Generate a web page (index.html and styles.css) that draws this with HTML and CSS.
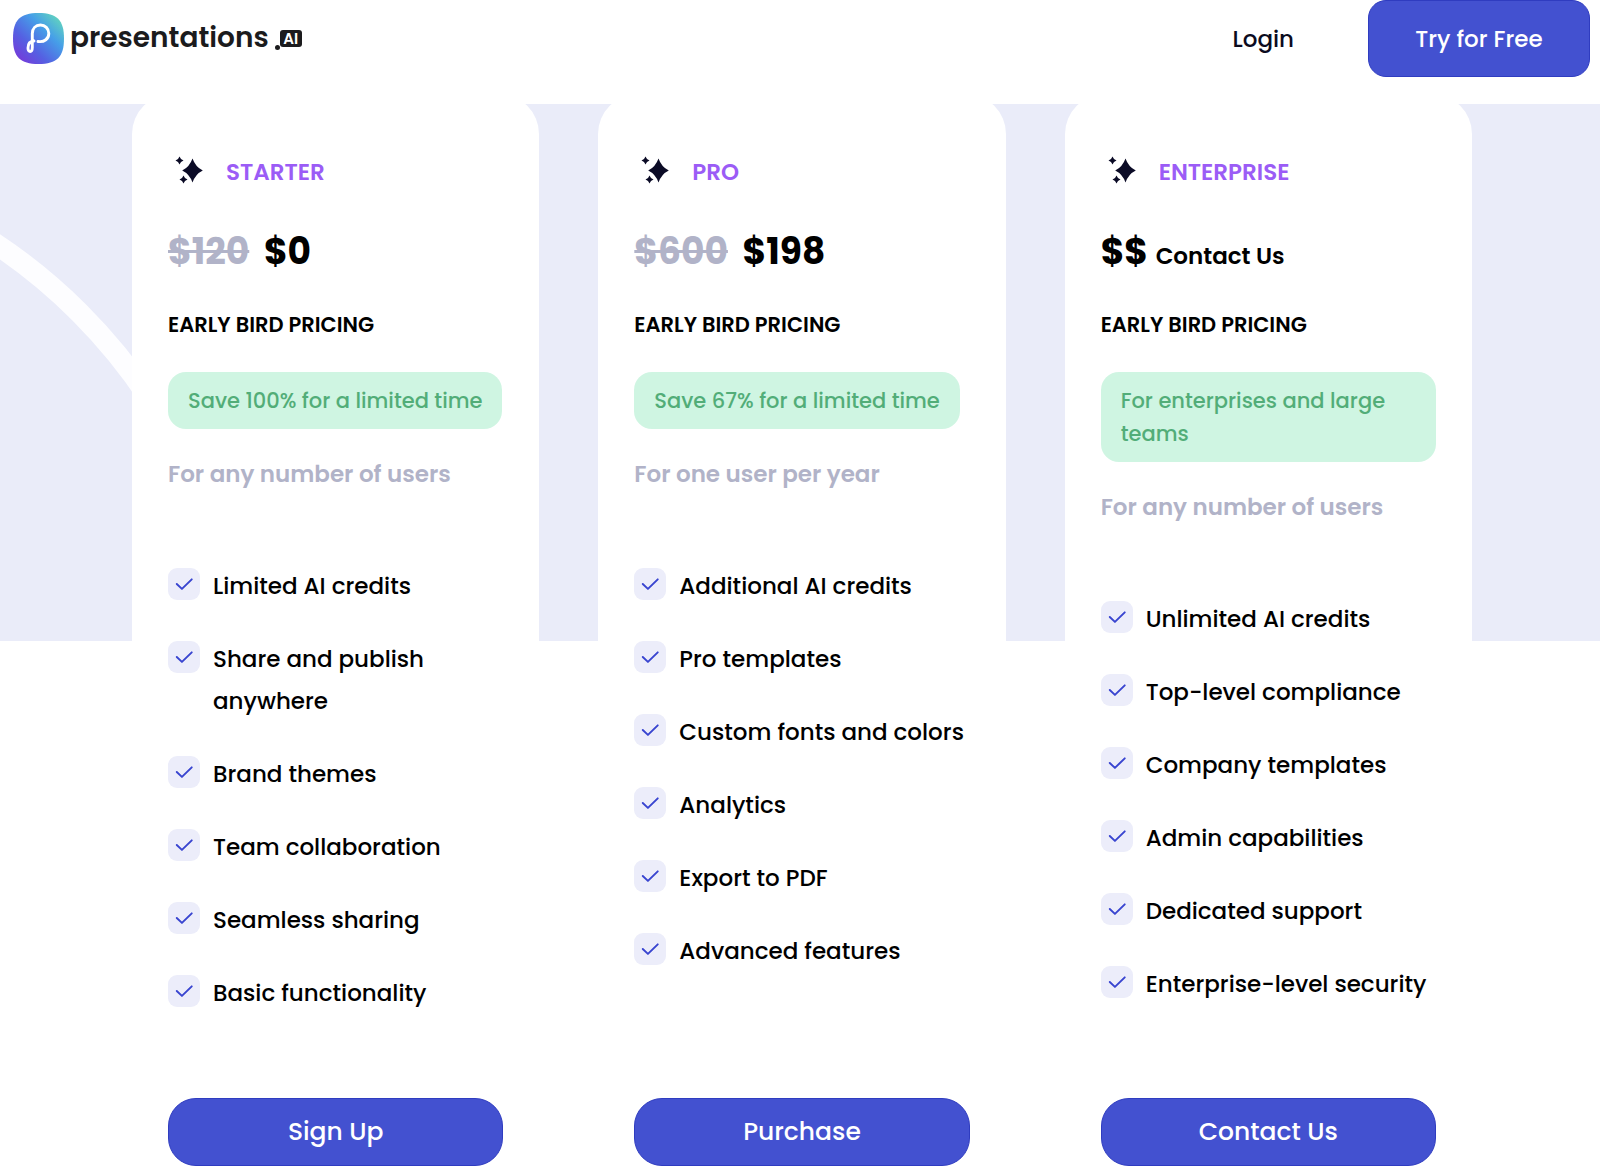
FILE: index.html
```html
<!DOCTYPE html>
<html lang="en">
<head>
    <meta charset="UTF-8">
    <meta name="viewport" content="width=device-width, initial-scale=1.0">
    <title>Pricing - Presentations.AI</title>
    <link rel="stylesheet" href="styles.css">
</head>
<body>
    <!-- Shared icons -->
    <svg class="sprite" aria-hidden="true">
        <symbol id="sparkle" viewBox="0 0 36 36">
            <path d="M24.500 4.500Q27.500 13 34.800 16.500Q27.500 20 24.500 28.500Q21.500 20 14.200 16.500Q21.500 13 24.500 4.500Z"/>
            <path d="M11.500 2.500Q12.500 5.500 15.500 6.500Q12.500 7.500 11.500 10.500Q10.500 7.500 7.500 6.500Q10.500 5.500 11.500 2.500Z"/>
            <path d="M15.500 21.500Q16.500 24.500 19.500 25.500Q16.500 26.500 15.500 29.500Q14.500 26.500 11.500 25.500Q14.500 24.500 15.500 21.500Z"/>
        </symbol>
        <symbol id="check" viewBox="0 0 31 31">
            <path d="M8.500 15.500L13.500 20.200L23 11" fill="none" stroke="#3945d0" stroke-width="1.900" stroke-linecap="round" stroke-linejoin="round"/>
        </symbol>
    </svg>

    <header class="header">
        <a class="logo" href="#">
            <svg class="logo-mark" viewBox="0 0 51 51" aria-hidden="true">
                <defs>
                    <linearGradient id="logo-fill" x1="0" y1="1" x2="1" y2="0">
                        <stop offset="0.050" stop-color="#7a35d8"/>
                        <stop offset="0.350" stop-color="#5560e2"/>
                        <stop offset="0.650" stop-color="#469fe8"/>
                        <stop offset="0.950" stop-color="#66dcb8"/>
                    </linearGradient>
                </defs>
                <path d="M25.500 0C44 0 51 7 51 25.500S44 51 25.500 51S0 44 0 25.500S7 0 25.500 0Z" fill="url(#logo-fill)"/>
                <path d="M25 28.500C31.500 29.500 35.800 25.500 35.800 20.500C35.800 15.500 32 12 27.500 12C22.500 12 19.300 15.500 19.300 20.500V34.500C19.300 39.800 15 39.800 15 35C15 30.500 16.500 28.300 21 28" fill="none" stroke="#fff" stroke-width="2.900" stroke-linecap="round"/>
            </svg>
            <span class="logo-name">presentations</span>
            <span class="logo-dot"></span>
            <span class="logo-ai">AI</span>
        </a>
        <nav class="nav">
            <a class="login" href="#">Login</a>
            <button class="btn btn-try" type="button">Try for Free</button>
        </nav>
    </header>

    <main class="pricing">
        <div class="band">
            <svg class="band-ring" aria-hidden="true">
                <circle cx="-306" cy="594" r="545"/>
            </svg>
        </div>

        <div class="plans">
            <section class="plan">
                <h2 class="plan-name"><svg class="sparkle"><use href="#sparkle"/></svg>STARTER</h2>
                <p class="price"><s class="old-price">$120</s> <span>$0</span></p>
                <p class="early">EARLY BIRD PRICING</p>
                <p class="save">Save 100% for a limited time</p>
                <p class="users">For any number of users</p>
                <ul class="features">
                    <li><svg class="check"><use href="#check"/></svg>Limited AI credits</li>
                    <li><svg class="check"><use href="#check"/></svg>Share and publish anywhere</li>
                    <li><svg class="check"><use href="#check"/></svg>Brand themes</li>
                    <li><svg class="check"><use href="#check"/></svg>Team collaboration</li>
                    <li><svg class="check"><use href="#check"/></svg>Seamless sharing</li>
                    <li><svg class="check"><use href="#check"/></svg>Basic functionality</li>
                </ul>
                <button class="btn btn-plan" type="button">Sign Up</button>
            </section>

            <section class="plan">
                <h2 class="plan-name"><svg class="sparkle"><use href="#sparkle"/></svg>PRO</h2>
                <p class="price"><s class="old-price">$600</s> <span>$198</span></p>
                <p class="early">EARLY BIRD PRICING</p>
                <p class="save">Save 67% for a limited time</p>
                <p class="users">For one user per year</p>
                <ul class="features">
                    <li><svg class="check"><use href="#check"/></svg>Additional AI credits</li>
                    <li><svg class="check"><use href="#check"/></svg>Pro templates</li>
                    <li><svg class="check"><use href="#check"/></svg>Custom fonts and colors</li>
                    <li><svg class="check"><use href="#check"/></svg>Analytics</li>
                    <li><svg class="check"><use href="#check"/></svg>Export to PDF</li>
                    <li><svg class="check"><use href="#check"/></svg>Advanced features</li>
                </ul>
                <button class="btn btn-plan" type="button">Purchase</button>
            </section>

            <section class="plan">
                <h2 class="plan-name"><svg class="sparkle"><use href="#sparkle"/></svg>ENTERPRISE</h2>
                <p class="price"><span>$$</span> <span class="price-note">Contact Us</span></p>
                <p class="early">EARLY BIRD PRICING</p>
                <p class="save">For enterprises and large teams</p>
                <p class="users">For any number of users</p>
                <ul class="features">
                    <li><svg class="check"><use href="#check"/></svg>Unlimited AI credits</li>
                    <li><svg class="check"><use href="#check"/></svg>Top-level compliance</li>
                    <li><svg class="check"><use href="#check"/></svg>Company templates</li>
                    <li><svg class="check"><use href="#check"/></svg>Admin capabilities</li>
                    <li><svg class="check"><use href="#check"/></svg>Dedicated support</li>
                    <li><svg class="check"><use href="#check"/></svg>Enterprise-level security</li>
                </ul>
                <button class="btn btn-plan" type="button">Contact Us</button>
            </section>
        </div>
    </main>
</body>
</html>
```

FILE: styles.css
```css
* {
    box-sizing: border-box;
}

body {
    margin: 0;
    font-family: Poppins, Inter, sans-serif;
    font-size: 23px;
    font-weight: 500;
    color: #000;
    background: #fff;
}

h2, p, ul {
    margin: 0;
    padding: 0;
}

a {
    color: inherit;
    text-decoration: none;
}

.sprite {
    display: none;
}

/* Header */
.header {
    display: flex;
    justify-content: space-between;
    align-items: flex-start;
    height: 104px;
    padding: 0 10px 0 13px;
}

.logo {
    display: flex;
    align-items: center;
    height: 76px;
    color: #1b1b1d;
}

.logo-mark {
    width: 51px;
    height: 51px;
    margin-right: 6px;
}

.logo-name {
    font-size: 28px;
    font-weight: 600;
}

.logo-dot {
    width: 5px;
    height: 5px;
    margin: 18px 0 0 6px;
    border-radius: 50%;
    background: #1b1b1d;
}

.logo-ai {
    width: 22px;
    border-radius: 3px;
    background: #1b1b1d;
    color: #fff;
    font-size: 15px;
    font-weight: 600;
    line-height: 17px;
    text-align: center;
}

.nav {
    display: flex;
    align-items: center;
    gap: 74px;
}

.login {
    color: #0b0b1e;
}

.btn {
    border: 1px solid #2f3cc0;
    background: #4351d0;
    color: #fff;
    font-family: inherit;
    cursor: pointer;
}

.btn-try {
    height: 77px;
    padding: 0 40px;
    min-width: 222px;
    border-radius: 18px;
    font-size: 23px;
    font-weight: 500;
}

/* Pricing */
.pricing {
    position: relative;
}

.band {
    position: absolute;
    top: 0;
    left: 0;
    right: 0;
    height: 537px;
    overflow: hidden;
    background: #eaecf9;
}

.band-ring {
    width: 100%;
    height: 100%;
}

.band-ring circle {
    fill: none;
    stroke: #fdfdff;
    stroke-width: 21px;
}

.plans {
    position: relative;
    display: grid;
    grid-template-columns: repeat(3, 1fr);
    gap: 59px;
    padding: 0 128px 0 132px;
}

.plan {
    display: flex;
    flex-direction: column;
    align-items: flex-start;
    margin-top: -10px;
    padding: 60px 36px 8px;
    border-radius: 40px;
    background: #fff;
}

.plan-name {
    display: flex;
    align-items: center;
    gap: 22px;
    color: #9b5cf6;
    font-size: 23px;
    font-weight: 600;
    line-height: 36px;
}

.sparkle {
    width: 36px;
    height: 36px;
    fill: #0b0b26;
}

.price {
    margin-top: 34px;
    font-size: 36px;
    font-weight: 700;
    line-height: 56px;
}

.old-price {
    margin-right: 7px;
    color: #b1b3c8;
}

.price-note {
    font-size: 23px;
    font-weight: 600;
    line-height: 1;
}

.early {
    margin-top: 29px;
    font-size: 21px;
    font-weight: 600;
    line-height: 32px;
}

.save {
    margin-top: 31px;
    padding: 12px 20px;
    border-radius: 18px;
    background: #cff5e2;
    color: #52ad78;
    font-size: 21px;
    line-height: 33px;
}

.users {
    margin-top: 25px;
    color: #b1b3c8;
    font-weight: 600;
    line-height: 40px;
}

.features {
    display: flex;
    flex-direction: column;
    gap: 31px;
    margin: 71px 0 84px;
    list-style: none;
}

.features li {
    display: flex;
    gap: 13px;
    line-height: 42px;
}

.check {
    flex: none;
    width: 32px;
    height: 32px;
    margin-top: 3px;
    border-radius: 9px;
    background: #ecedfa;
}

.btn-plan {
    flex: none;
    width: 100%;
    height: 68px;
    margin-top: auto;
    border-radius: 28px;
    font-size: 25px;
    font-weight: 500;
}
```
